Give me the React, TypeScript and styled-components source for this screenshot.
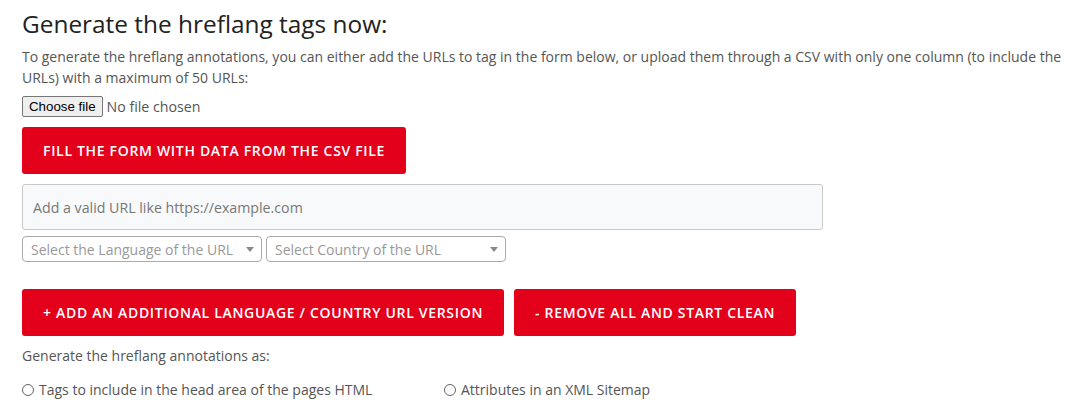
import React from "react";
import styled, { createGlobalStyle } from "styled-components";

const Global = createGlobalStyle`
  html, body { margin: 0; padding: 0; background: #fff; }
  body { font-family: "Open Sans", "Noto Sans", sans-serif; color: #555; }
  * { box-sizing: border-box; }
`;

const Page = styled.div`
  padding: 8px 10px 0 22px;
  display: flex;
  flex-direction: column;
`;

const Title = styled.h2`
  margin: 0;
  font-size: 24.4px;
  line-height: 32px;
  font-weight: 400;
  color: #222;
`;

const Intro = styled.p`
  margin: 6px 0 0 0;
  font-size: 14px;
  line-height: 21px;
  color: #555;
`;

const FileRow = styled.div`
  margin-top: 8px;
  display: flex;
  align-items: center;
  gap: 4px;
  height: 21px;
`;

const FileButton = styled.button`
  font-family: "Liberation Sans", Arial, sans-serif;
  font-size: 13.3px;
  height: 21px;
  padding: 0 6px;
  background: #efefef;
  color: #000;
  border: 1px solid #767676;
  border-radius: 2px;
`;

const FileStatus = styled.span`
  font-size: 14.2px;
  color: #555;
`;

const RedButton = styled.button`
  height: 47px;
  padding: 0 21px;
  background: #e3001b;
  color: #fff;
  border: none;
  border-radius: 3px;
  font-family: inherit;
  font-weight: 600;
  font-size: 14px;
  letter-spacing: 0.68px;
  text-transform: uppercase;
  cursor: pointer;
`;

const CsvButton = styled(RedButton)`
  margin-top: 10px;
  align-self: flex-start;
`;

const UrlInput = styled.input`
  margin-top: 10px;
  width: 801px;
  height: 46px;
  padding: 0 10px;
  background: #f8f9fa;
  border: 1px solid #c9c9c9;
  border-radius: 3px;
  font-family: inherit;
  font-size: 14.2px;
  color: #555;
  &::placeholder { color: #777; }
`;

const SelectRow = styled.div`
  margin-top: 6px;
  display: flex;
  gap: 4px;
`;

const FakeSelect = styled.div`
  width: 240px;
  height: 26px;
  border: 1px solid #aaa;
  border-radius: 4px;
  display: flex;
  align-items: center;
  justify-content: space-between;
  padding: 0 7px 0 8px;
  font-size: 14px;
  color: #999;
  background: #fff;
`;

const Caret = styled.span`
  width: 0;
  height: 0;
  border-left: 4px solid transparent;
  border-right: 4px solid transparent;
  border-top: 5px solid #888;
`;

const ButtonRow = styled.div`
  margin-top: 27px;
  display: flex;
  gap: 10px;
`;

const Label = styled.div`
  margin-top: 10px;
  font-size: 14px;
  line-height: 20px;
  color: #555;
`;

const RadioRow = styled.div`
  margin-top: 14px;
  display: flex;
`;

const RadioLabel = styled.label<{ $w?: number }>`
  display: flex;
  align-items: center;
  gap: 5px;
  width: ${(p) => (p.$w ? `${p.$w}px` : "auto")};
  font-size: 14px;
  color: #555;
`;

const Circle = styled.span`
  width: 12px;
  height: 12px;
  border: 1px solid #666;
  border-radius: 50%;
  flex: none;
`;

export default function App() {
  return (
    <>
      <Global />
      <Page>
        <Title>Generate the hreflang tags now:</Title>
        <Intro>
          To generate the hreflang annotations, you can either add the URLs to tag in the form below, or upload them
          through a CSV with only one column (to include the URLs) with a maximum of 50 URLs:
        </Intro>
        <FileRow>
          <FileButton>Choose file</FileButton>
          <FileStatus>No file chosen</FileStatus>
        </FileRow>
        <CsvButton>Fill the form with data from the CSV file</CsvButton>
        <UrlInput placeholder="Add a valid URL like https://example.com" />
        <SelectRow>
          <FakeSelect>
            <span>Select the Language of the URL</span>
            <Caret />
          </FakeSelect>
          <FakeSelect>
            <span>Select Country of the URL</span>
            <Caret />
          </FakeSelect>
        </SelectRow>
        <ButtonRow>
          <RedButton>+ Add an additional language / country URL version</RedButton>
          <RedButton>- Remove all and start clean</RedButton>
        </ButtonRow>
        <Label>Generate the hreflang annotations as:</Label>
        <RadioRow>
          <RadioLabel $w={422}>
            <Circle />
            Tags to include in the head area of the pages HTML
          </RadioLabel>
          <RadioLabel>
            <Circle />
            Attributes in an XML Sitemap
          </RadioLabel>
        </RadioRow>
      </Page>
    </>
  );
}
